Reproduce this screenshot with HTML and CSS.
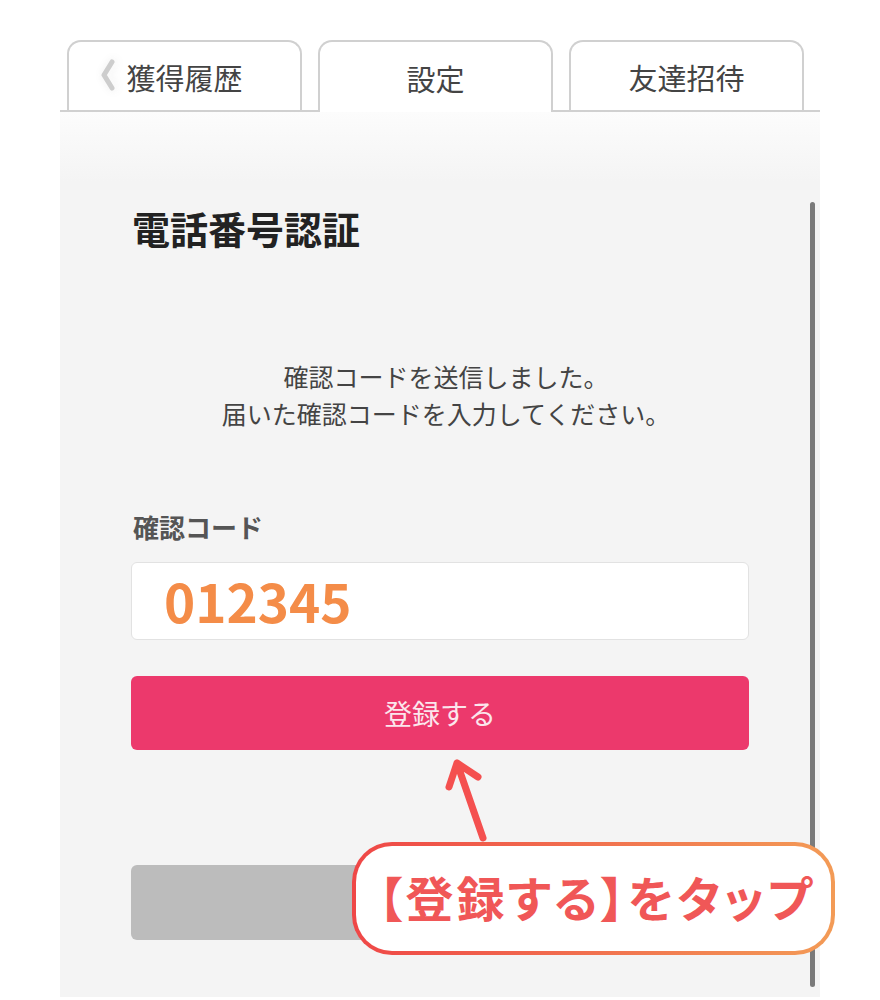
FILE: index.html
```html
<!DOCTYPE html>
<html lang="ja">

<head>
    <meta charset="UTF-8">
    <meta name="viewport" content="width=device-width, initial-scale=1.0">
    <title>電話番号認証</title>
    <link rel="stylesheet" href="styles.css">
</head>

<body>
    <div class="page">
        <div class="tabs">
            <div class="tab">
                <svg class="chevron" width="18" height="34" viewBox="0 0 18 34">
                    <path d="M13 4 L5 17 L13 30" fill="none" stroke="#cdcdcd" stroke-width="5" stroke-linecap="round" stroke-linejoin="round" />
                </svg>
                獲得履歴
            </div>
            <div class="tab active">設定</div>
            <div class="tab">友達招待</div>
        </div>

        <div class="panel">
            <div class="inner">
                <h1 class="title">電話番号認証</h1>
                <p class="message">確認コードを送信しました。<br>届いた確認コードを入力してください。</p>
                <div class="label">確認コード</div>
                <div class="input">012345</div>
                <div class="btn btn-primary">登録する</div>
                <div class="btn btn-gray"></div>
            </div>
            <div class="scrollbar"></div>
        </div>

        <!-- 注釈 -->
        <svg class="arrow" width="60" height="90" viewBox="0 0 60 90">
            <path d="M43 85 L17 10 M9 34 L17 10 L38 24" fill="none" stroke="#f4504f" stroke-width="7" stroke-linecap="round" stroke-linejoin="round" />
        </svg>
        <div class="callout">【登録する】をタップ</div>
    </div>
</body>

</html>
```

FILE: styles.css
```css
html,
body {
    margin: 0;
}

body {
    background: #fff;
    font-family: "Noto Sans CJK JP", "Noto Sans", sans-serif;
    color: #444;
}

.page {
    position: relative;
    width: 760px;
    margin-left: 60px;
    padding-top: 40px;
}

.tabs {
    display: flex;
    align-items: flex-end;
    gap: 16px;
    height: 70px;
    padding-left: 7px;
    border-bottom: 2px solid #d0d0d0;
}

.tab {
    position: relative;
    box-sizing: border-box;
    width: 235px;
    height: 70px;
    border: 2px solid #d0d0d0;
    border-bottom: none;
    border-radius: 14px 14px 0 0;
    background: #fff;
    font-size: 29px;
    line-height: 70px;
    text-align: center;
    color: #444;
}

.tab.active {
    height: 72px;
    margin-bottom: -2px;
    line-height: 72px;
}

.chevron {
    position: absolute;
    left: 30px;
    top: 16px;
    filter: drop-shadow(2px 0 3px #fff) drop-shadow(0 0 3px #eee);
}

.panel {
    position: relative;
    height: 885px;
    background: linear-gradient(#fcfcfc 0, #f4f4f4 70px);
}

.inner {
    width: 618px;
    margin-left: 71px;
    padding-top: 97px;
}

.title {
    margin: 0;
    margin-left: 1px;
    font-size: 38px;
    line-height: 1;
    font-weight: 700;
    color: #222;
}

.message {
    margin: 111px 0 0;
    padding-left: 12px;
    font-size: 25px;
    line-height: 37px;
    text-align: center;
    color: #444;
}

.label {
    margin: 82px 0 0 2px;
    font-size: 26px;
    line-height: 1;
    font-weight: 700;
    color: #555;
}

.input {
    box-sizing: border-box;
    height: 78px;
    margin-top: 22px;
    padding-left: 32px;
    border: 1px solid #e2e2e2;
    border-radius: 6px;
    background: #fff;
    font-size: 53px;
    font-weight: 700;
    line-height: 74px;
    color: #f48c48;
}

.btn {
    border-radius: 6px;
}

.btn-primary {
    height: 74px;
    margin-top: 36px;
    background: #ec396c;
    font-size: 28px;
    line-height: 74px;
    text-align: center;
    color: #fbe6ec;
}

.btn-gray {
    height: 75px;
    margin-top: 115px;
    background: #bcbcbc;
}

.scrollbar {
    position: absolute;
    left: 750px;
    top: 90px;
    width: 5px;
    height: 785px;
    border-radius: 3px;
    background: #7a7a7a;
}

.arrow {
    position: absolute;
    left: 380px;
    top: 753px;
}

.callout {
    position: absolute;
    left: 292px;
    top: 842px;
    box-sizing: border-box;
    width: 483px;
    height: 113px;
    padding-left: 6px;
    border: 4px solid transparent;
    border-radius: 40px;
    background: linear-gradient(#fff, #fff) padding-box, linear-gradient(90deg, #ef4747, #f39b56) border-box;
    font-size: 48px;
    font-weight: 700;
    font-feature-settings: "palt";
    letter-spacing: 3px;
    line-height: 101px;
    text-align: center;
    color: #f05757;
    white-space: nowrap;
}
```
